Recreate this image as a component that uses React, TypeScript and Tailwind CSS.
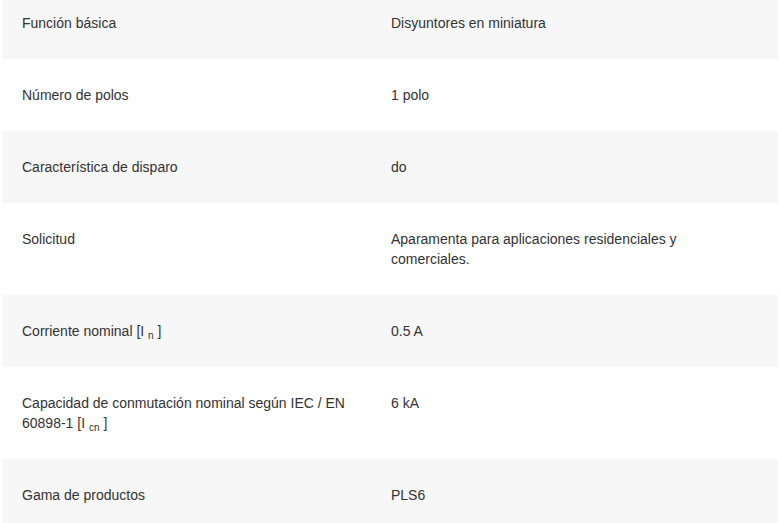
import React from 'react';

type Row = { label: React.ReactNode; value: React.ReactNode };

const rows: Row[] = [
  { label: 'Función básica', value: 'Disyuntores en miniatura' },
  { label: 'Número de polos', value: '1 polo' },
  { label: 'Característica de disparo', value: 'do' },
  { label: 'Solicitud', value: 'Aparamenta para aplicaciones residenciales y comerciales.' },
  {
    label: (
      <>
        Corriente nominal [I <sub className="text-[10px] leading-none">n</sub> ]
      </>
    ),
    value: '0.5 A',
  },
  {
    label: (
      <>
        Capacidad de conmutación nominal según IEC / EN 60898-1 [I{' '}
        <sub className="text-[10px] leading-none">cn</sub> ]
      </>
    ),
    value: '6 kA',
  },
  { label: 'Gama de productos', value: 'PLS6' },
];

const App: React.FC = () => {
  return (
    <div className="h-[523px] w-[783px] overflow-hidden bg-white font-['Liberation_Sans',Arial,sans-serif] text-[14px] leading-5 text-[#333]">
      {/* tabla de características */}
      <div className="-mt-[13px] ml-[2px] w-[776px]">
        {rows.map((row, i) => (
          <div key={i} className={`flex py-[26px] ${i % 2 === 0 ? 'bg-[#f7f7f7]' : 'bg-white'}`}>
            <div className="w-[369px] shrink-0 pl-5">{row.label}</div>
            <div className="w-[340px] pl-5">{row.value}</div>
          </div>
        ))}
      </div>
    </div>
  );
};

export default App;
